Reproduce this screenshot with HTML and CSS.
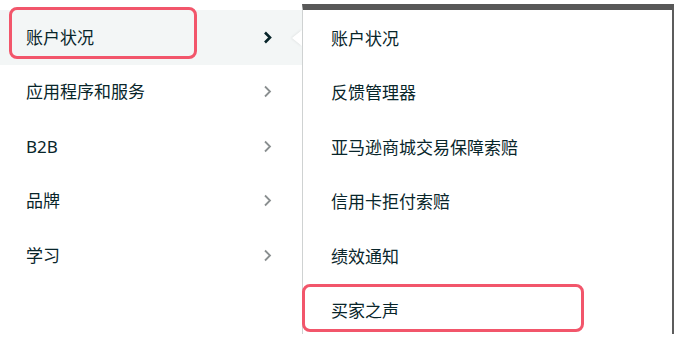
FILE: index.html
```html
<!DOCTYPE html>
<html>

<head>
    <link rel="stylesheet" href="styles.css">
    <title>菜单</title>
</head>

<body>
    <div class="menu">
        <div class="side">
            <div class="item active">
                <span class="mark mark-left"></span>
                <span class="label">账户状况</span>
                <svg class="chev" width="9" height="13" viewBox="0 0 9 13"><path d="M2 1.5 L7 6.5 L2 11.5" /></svg>
            </div>
            <div class="item">
                <span class="label">应用程序和服务</span>
                <svg class="chev" width="9" height="13" viewBox="0 0 9 13"><path d="M2 1.5 L7 6.5 L2 11.5" /></svg>
            </div>
            <div class="item">
                <span class="label">B2B</span>
                <svg class="chev" width="9" height="13" viewBox="0 0 9 13"><path d="M2 1.5 L7 6.5 L2 11.5" /></svg>
            </div>
            <div class="item">
                <span class="label">品牌</span>
                <svg class="chev" width="9" height="13" viewBox="0 0 9 13"><path d="M2 1.5 L7 6.5 L2 11.5" /></svg>
            </div>
            <div class="item">
                <span class="label">学习</span>
                <svg class="chev" width="9" height="13" viewBox="0 0 9 13"><path d="M2 1.5 L7 6.5 L2 11.5" /></svg>
            </div>
        </div>

        <div class="sub">
            <span class="pointer"></span>
            <div class="sub-item">账户状况</div>
            <div class="sub-item">反馈管理器</div>
            <div class="sub-item">亚马逊商城交易保障索赔</div>
            <div class="sub-item">信用卡拒付索赔</div>
            <div class="sub-item">绩效通知</div>
            <div class="sub-item">
                <span class="mark mark-right"></span>
                买家之声
            </div>
        </div>
    </div>
</body>

</html>
```

FILE: styles.css
```css
body {
    margin: 0;
    background: #ffffff;
    font-family: "Noto Sans", "Noto Sans CJK SC", sans-serif;
    color: #08252a;
    overflow: hidden;
}

.menu {
    display: flex;
    align-items: flex-start;
    width: 679px;
    height: 340px;
}

.side {
    width: 302px;
    padding-top: 10px;
}

.item {
    position: relative;
    display: flex;
    align-items: center;
    justify-content: space-between;
    height: 54.5px;
    padding: 0 30px 0 26px;
    box-sizing: border-box;
    font-size: 17px;
}

.item.active {
    background: #f3f6f6;
}

.label {
    line-height: 1;
}

.chev path {
    fill: none;
    stroke: #8a8f90;
    stroke-width: 1.8;
}

.item.active .chev path {
    stroke: #08252a;
    stroke-width: 2.6;
}

.sub {
    position: relative;
    width: 372px;
    height: 330px;
    margin-top: 4px;
    border-top: 6px solid #585858;
    border-left: 1px solid #cfd2d2;
    border-right: 2px solid #5c5c5c;
    box-sizing: border-box;
    background: #ffffff;
}

.sub-item {
    position: relative;
    display: flex;
    align-items: center;
    height: 54.5px;
    padding-left: 28px;
    font-size: 17px;
}

.pointer {
    position: absolute;
    left: -11px;
    top: 20px;
    width: 0;
    height: 0;
    border-top: 8px solid transparent;
    border-bottom: 8px solid transparent;
    border-right: 10px solid #ffffff;
    filter: drop-shadow(-1px 0 1px rgba(0, 0, 0, 0.08));
}

.mark {
    position: absolute;
    border: 3px solid #f2566b;
    border-radius: 8px;
    box-sizing: border-box;
}

.mark-left {
    left: 9px;
    top: -3px;
    width: 188px;
    height: 52px;
}

.mark-right {
    left: -1px;
    top: 1px;
    width: 282px;
    height: 48px;
}
```
